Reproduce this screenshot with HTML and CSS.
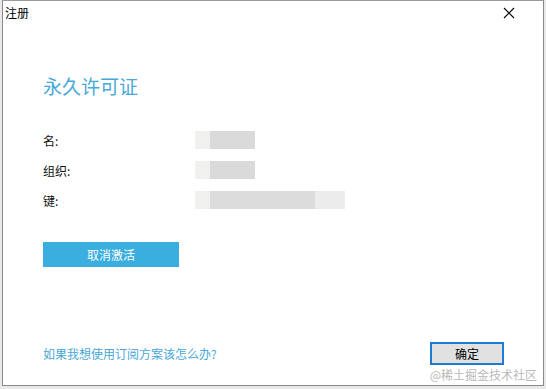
FILE: index.html
```html
<!DOCTYPE html>
<html>
<head>
<meta charset="utf-8">
<link rel="stylesheet" href="styles.css">
</head>
<body>
<div class="window">
  <div class="titlebar">
    <span class="title">注册</span>
    <svg class="close" width="12" height="12" viewBox="0 0 12 12"><path d="M1 1L11 11M11 1L1 11" stroke="#000" stroke-width="1.1" fill="none"/></svg>
  </div>
  <div class="content">
    <h1 class="heading">永久许可证</h1>
    <div class="fields">
      <div class="row"><span class="label">名:</span><span class="blur w1"></span></div>
      <div class="row"><span class="label">组织:</span><span class="blur w1"></span></div>
      <div class="row"><span class="label">键:</span><span class="blur w2"></span></div>
    </div>
    <button class="deactivate">取消激活</button>
  </div>
  <div class="footer">
    <a class="link">如果我想使用订阅方案该怎么办?</a>
    <button class="ok">确定</button>
  </div>
  <div class="watermark">@稀土掘金技术社区</div>
</div>
</body>
</html>
```
FILE: styles.css
```css
html, body { margin: 0; padding: 0; }
body {
  background: #e9e9e9;
  width: 546px;
  height: 389px;
  overflow: hidden;
  font-family: "Noto Sans CJK SC", "Noto Sans", sans-serif;
}
.window {
  position: relative;
  margin-left: 2px;
  width: 540px;
  height: 384px;
  border: 1px solid #8a8a8a;
  border-top-color: #9a9a9a;
  background: #fff;
  display: flex;
  flex-direction: column;
}
.titlebar {
  height: 24px;
  display: flex;
  align-items: center;
  justify-content: space-between;
  padding: 0 28px 0 2px;
}
.title { font-size: 12px; color: #000; line-height: 14px; }
.close { display: block; }
.content {
  padding: 48px 0 0 40px;
  flex: 1;
}
.heading {
  margin: 0;
  font-size: 19px;
  font-weight: normal;
  color: #46a9d6;
  line-height: 26px;
}
.fields {
  margin-top: 32px;
  display: flex;
  flex-direction: column;
  gap: 12px;
}
.row {
  display: flex;
  align-items: center;
  height: 18px;
}
.label {
  width: 152px;
  font-size: 12px;
  color: #111;
}
.blur {
  height: 18px;
  background: linear-gradient(90deg, #f0f0ee 0 25%, #dadada 25% 100%);
  filter: blur(0.6px);
}
.w1 { width: 60px; }
.w2 { width: 150px; background: linear-gradient(90deg, #f0f0ee 0 10%, #dcdcdc 10% 80%, #ececec 80% 100%); }
.deactivate {
  margin-top: 33px;
  width: 136px;
  height: 25px;
  border: none;
  background: #3aaede;
  color: #fff;
  font-family: inherit;
  font-size: 12px;
  padding: 0;
}
.footer {
  display: flex;
  justify-content: space-between;
  align-items: center;
  padding: 0 40px 20px 40px;
}
.link {
  font-size: 12px;
  color: #47a7d6;
}
.ok {
  width: 74px;
  height: 23px;
  border: 2px solid #1e7bd0;
  background: #e1e1e1;
  font-family: inherit;
  font-size: 12px;
  color: #000;
  padding: 0;
  margin-right: -1px;
}
.watermark {
  position: absolute;
  right: 6px;
  bottom: 2px;
  font-size: 12px;
  color: #b9b9b9;
}
```
